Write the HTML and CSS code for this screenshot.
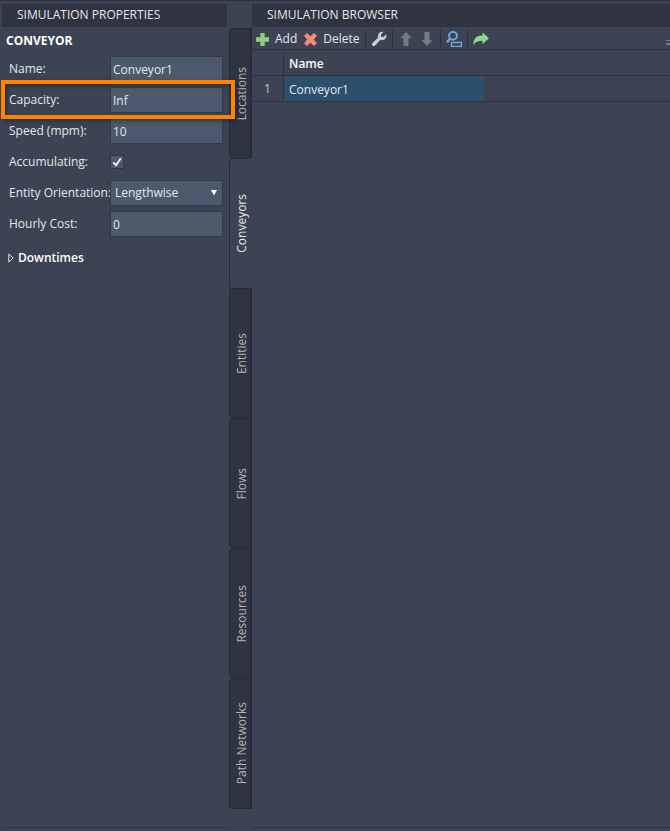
FILE: index.html
```html
<!DOCTYPE html>
<html lang="en">
<head>
<meta charset="utf-8">
<title>Simulation</title>
<link rel="stylesheet" href="styles.css">
</head>
<body>
<div class="workspace">
  <section class="panel properties">
    <h2 class="panel-title">SIMULATION PROPERTIES</h2>
    <h3 class="group-title">CONVEYOR</h3>
    <form class="fields">
      <div class="field"><label for="name">Name:</label><input class="box" id="name" type="text" value="Conveyor1"></div>
      <div class="field highlighted"><label for="capacity">Capacity:</label><input class="box" id="capacity" type="text" value="Inf"></div>
      <div class="field"><label for="speed">Speed (mpm):</label><input class="box" id="speed" type="text" value="10"></div>
      <div class="field"><label for="accumulating">Accumulating:</label>
        <span class="check"><input id="accumulating" type="checkbox" checked><svg viewBox="0 0 14 14"><path d="M3.3 7.3 6 10.2 10.8 3.3" fill="none" stroke="#f0f2f5" stroke-width="1.9"/></svg></span></div>
      <div class="field"><label for="orientation">Entity Orientation:</label>
        <span class="select"><select class="box" id="orientation"><option>Lengthwise</option></select><svg viewBox="0 0 6 6"><path d="M0 0h6L3 5.5z" fill="#fff"/></svg></span></div>
      <div class="field"><label for="cost">Hourly Cost:</label><input class="box" id="cost" type="text" value="0"></div>
    </form>
    <button class="expander" type="button"><svg viewBox="0 0 6 10"><path d="M.8 1v8L5.2 5z" fill="none" stroke="#e4e7ec"/></svg>Downtimes</button>
  </section>
  <nav class="tabs">
    <button class="tab" type="button"><span>Locations</span></button>
    <button class="tab active" type="button"><span>Conveyors</span></button>
    <button class="tab" type="button"><span>Entities</span></button>
    <button class="tab" type="button"><span>Flows</span></button>
    <button class="tab" type="button"><span>Resources</span></button>
    <button class="tab" type="button"><span>Path Networks</span></button>
  </nav>
  <section class="panel browser">
    <h2 class="panel-title">SIMULATION BROWSER</h2>
    <div class="toolbar">
      <button class="tool add" type="button"><svg class="small" viewBox="0 0 12 12"><path d="M4 0h4v4h4v4H8v4H4V8H0V4h4z" fill="#8ed088"/></svg>Add</button>
      <button class="tool delete" type="button"><svg class="small" viewBox="0 0 12 12"><path d="M2.8 0 6 3.1 9.2 0 12 2.5 9 6 12 9.500 9.200 12 6 8.900 2.800 12 0 9.500 3 6 0 2.500z" fill="#f58a76"/></svg>Delete</button>
      <span class="divider"></span>
      <button class="tool" type="button" aria-label="Settings"><svg viewBox="0 0 16 16"><path d="M12.400.9 9.900 3.600l.4 2.100 2.100.4 2.800-2.800c.8 2.800-.8 5.500-3.600 5.800-.9.100-1.500-.1-2.100-.3L3.900 14.700c-1.800 1.400-3.900-.8-2.500-2.600L7.100 6.800C6 3.400 8.900 0 12.400.9z" fill="#cfcfcf"/></svg></button>
      <span class="divider"></span>
      <button class="tool arrow" type="button" aria-label="Move up"><svg viewBox="0 0 12 16"><path d="M6 1 11.500 7H8.500v8h-5V7h-3z" fill="#757a83"/></svg></button>
      <button class="tool arrow" type="button" aria-label="Move down"><svg viewBox="0 0 12 16"><path d="M6 15 .5 9h3V1h5v8h3z" fill="#757a83"/></svg></button>
      <span class="divider"></span>
      <button class="tool" type="button" aria-label="Find"><svg viewBox="0 0 16 16"><g fill="none" stroke="#70a7e2"><circle cx="7" cy="4.800" r="3.900" stroke-width="1.900"/><path d="M4.300 7.700.9 11.200" stroke-width="2.600"/><path d="M5.500 11.500h10v4h-10z" stroke-width="1.400"/></g></svg></button>
      <span class="divider"></span>
      <button class="tool" type="button" aria-label="Go to"><svg viewBox="0 0 16 16"><path d="M.3 14C.3 7.500 3.500 4.500 9.500 4.500V1.500L16 7.300 9.500 13v-3.200c-4-.2-6.800 1.200-9.200 4.200z" fill="#8ed88a"/></svg></button>
      <span class="overflow"></span>
    </div>
    <table class="grid">
      <thead><tr><th class="index"></th><th class="name">Name</th><th></th></tr></thead>
      <tbody><tr><td class="index">1</td><td class="name selected">Conveyor1</td><td></td></tr></tbody>
    </table>
  </section>
</div>
</body>
</html>
```

FILE: styles.css
```css
* { box-sizing: border-box; }

body {
  margin: 0;
  background: #3c4453;
  color: #e4e7ec;
  font: 12px/16px "Open Sans", "Noto Sans", sans-serif;
}

button, input, select { font: inherit; color: inherit; }
button { border: 0; padding: 0; background: none; }
svg { display: block; flex: none; }

.workspace {
  display: grid;
  grid-template-columns: 229px 23px 1fr;
  min-height: 100vh;
  border-top: 1px solid #2d333f;
  padding-bottom: 3px;
}

.panel { padding-top: 3px; border-bottom: 1px solid #303744; }
.properties { margin-left: 2px; }

.panel-title {
  margin: 0;
  height: 23px;
  padding: 0 15px;
  background: #2f3440;
  font-size: 12px;
  font-weight: 400;
  line-height: 22px;
}
.properties .panel-title { margin-right: 2px; }

.group-title {
  margin: 6px 4px 7px;
  color: #fff;
  font-size: 12px;
  font-weight: 700;
  line-height: 16px;
}

.fields { display: grid; gap: 5px; padding: 0 6px 0 7px; }
.field {
  display: grid;
  grid-template-columns: 101px 1fr;
  align-items: center;
  height: 26px;
  position: relative;
  white-space: nowrap;
}
.highlighted::after {
  content: "";
  position: absolute;
  inset: -7px -12px -6px -8px;
  z-index: 2;
  border: 4px solid #ff8200;
  box-shadow: 2px 2px 4px #1c212a99, inset 2px 2px 4px #1c212a99;
  pointer-events: none;
}

.box {
  width: 100%;
  min-width: 0;
  height: 26px;
  margin: 0;
  padding: 0 2px;
  border: 1px solid #333a47;
  border-radius: 0;
  background: #4d596c;
  appearance: none;
  outline: 0;
}
.select { position: relative; }
.select .box { display: block; padding-left: 4px; }
.select svg { position: absolute; top: 10px; right: 6px; width: 6px; height: 6px; pointer-events: none; }

.check { position: relative; width: 14px; height: 14px; }
.check input {
  display: block;
  width: 14px;
  height: 14px;
  margin: 0;
  border: 1px solid #303744;
  background: #4d596c;
  appearance: none;
}
.check svg { position: absolute; inset: 0; pointer-events: none; }

.expander {
  display: flex;
  align-items: center;
  gap: 4px;
  margin: 13px 6px;
  color: #fff;
  font-size: 12px;
  font-weight: 600;
  line-height: 16px;
}
.expander svg { width: 6px; height: 10px; }

.tabs { padding-top: 27px; }
.tab {
  display: flex;
  align-items: center;
  justify-content: center;
  width: 100%;
  height: 130px;
  padding-left: 4px;
  border: 1px solid #262c37;
  border-right-width: 2px;
  border-bottom-width: 0;
  border-radius: 4px 0 0 4px;
  background: #2f3440;
  color: #aeb3bd;
}
.tab:last-child { height: 131px; border-bottom-width: 1px; }
.tab.active { border-right-color: transparent; background: #3c4453; color: #e4e7ec; }
.tab span { writing-mode: vertical-rl; transform: rotate(180deg); white-space: nowrap; }

.toolbar {
  display: flex;
  align-items: center;
  gap: 5px;
  height: 22px;
  padding: 2px 0 0 4px;
}
.tool { display: flex; align-items: center; gap: 6px; }
.tool svg { width: 16px; height: 16px; }
.tool .small { width: 13px; height: 13px; }
.add { margin-right: 2px; }
.tool.arrow { width: 16px; justify-content: center; }
.arrow svg { width: 12px; }
.divider { width: 1px; height: 18px; background: #2b313c; }
.overflow {
  width: 4px;
  height: 5px;
  margin: 6px 0 0 auto;
  border-top: 1px solid #737985;
  border-bottom: 2px solid #737985;
}

.grid { width: 100%; border-collapse: separate; border-spacing: 0; table-layout: fixed; border-top: 1px solid #2d3440; }
.grid th, .grid td { height: 26px; padding: 2px 5px 0; border-bottom: 1px solid #2d3440; text-align: left; }
.grid th { color: #fff; font-weight: 600; }
.grid .index { width: 32px; padding: 0; border-right: 1px solid #2d3440; text-align: center; }
.grid td.index { color: #c3c7cf; }
.grid .name { width: 200px; }
.grid .selected { background: #2e4f6c; }
```
